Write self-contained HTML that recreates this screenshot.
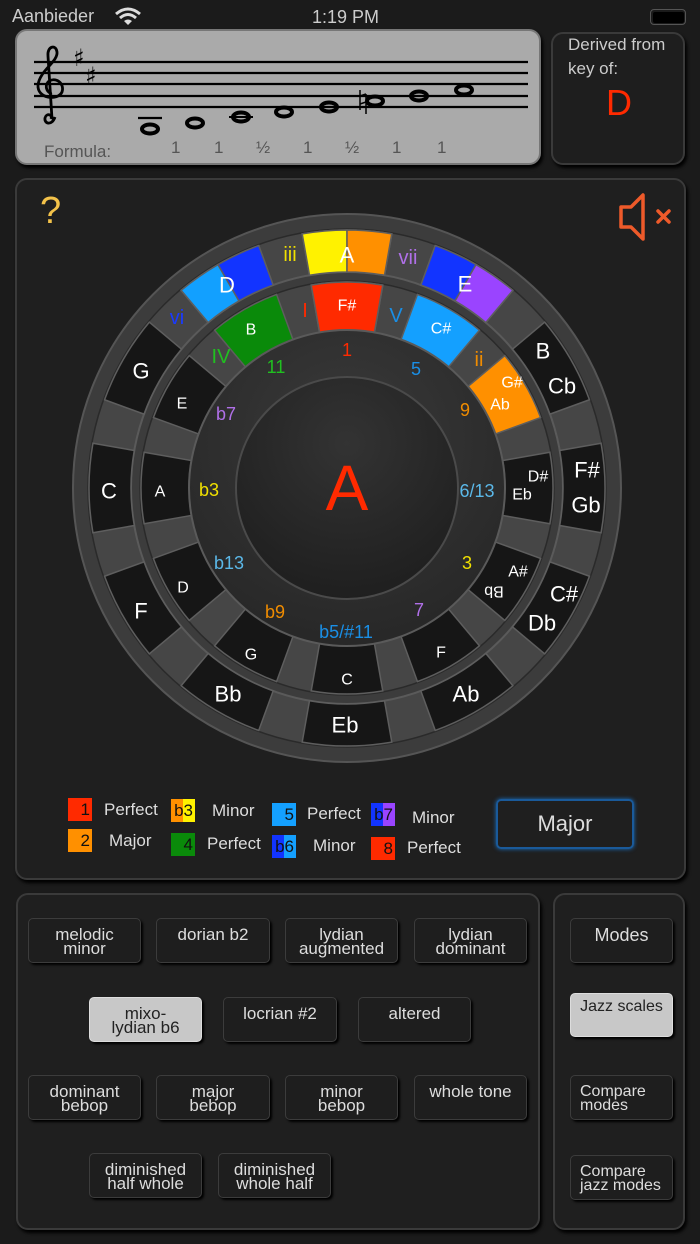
<!DOCTYPE html>
<html><head><meta charset="utf-8"><style>
*{margin:0;padding:0;box-sizing:border-box}
body{width:700px;height:1244px;background:#1b1b1b;font-family:"Liberation Sans",sans-serif;position:relative;overflow:hidden;color:#ddd}
.abs{position:absolute}
.panel{position:absolute;border:2px solid #3a3a3a;border-radius:12px;background:#1f1f1f;box-shadow:2px 3px 3px #000}
.btn{position:absolute;border:1.5px solid #3c3c3c;border-radius:5px;background:#1e1e1e;box-shadow:2px 2px 2px #000;text-align:center;font-size:17px;line-height:14px;color:#ddd;padding-top:9px}
.sel{background:#c8c8c8;color:#222;border-color:#ddd}
.lg{position:absolute;font-size:17px;color:#ddd}
.bx{position:absolute;width:24px;height:23px;font-size:17px;color:#111;text-align:right;padding-right:2px;line-height:23px}
</style></head><body>
<div class="abs" style="left:12px;top:6px;font-size:18px;color:#ccc">Aanbieder</div>
<svg class="abs" style="left:114px;top:7px" width="28" height="20" viewBox="0 0 28 20"><path d="M2 7 Q14 -3 26 7" stroke="#ddd" stroke-width="3" fill="none"/><path d="M6 11 Q14 4 22 11" stroke="#ddd" stroke-width="3" fill="none"/><path d="M14 18 L10 14 Q14 11 18 14 Z" fill="#ddd"/></svg>
<div class="abs" style="left:312px;top:7px;font-size:18px;color:#ccc">1:19 PM</div>
<div class="abs" style="left:650px;top:9px;width:36px;height:16px;border:1.5px solid #555;border-radius:4px;padding:1.5px"><div style="width:100%;height:100%;background:#000;border-radius:2px"></div></div>

<div class="abs" style="left:15px;top:29px;width:526px;height:136px;background:#aaa;border:2px solid #777;border-radius:12px;box-shadow:2px 3px 3px #000"></div>
<svg class="abs" style="left:0;top:0" width="545" height="170">
<g stroke="#000" stroke-width="2.2"><line x1="34" y1="62" x2="528" y2="62"/><line x1="34" y1="73" x2="528" y2="73"/><line x1="34" y1="84" x2="528" y2="84"/><line x1="34" y1="96" x2="528" y2="96"/><line x1="34" y1="107" x2="528" y2="107"/><line x1="138" y1="118" x2="162" y2="118"/></g>
<path d="M55 117 C52 126 44 124 45 118 C46 113 53 114 51 119 M52 119 L48 56 C47 46 56 44 57 52 C58 62 40 70 38 85 C37 99 58 101 62 92 C65 83 55 76 48 82 C44 87 48 94 52 93" stroke="#000" stroke-width="2.8" fill="none"/>
<text x="73" y="66" font-size="24" font-family="DejaVu Sans" fill="#000">♯</text>
<text x="85" y="84" font-size="24" font-family="DejaVu Sans" fill="#000">♯</text>
<g stroke="#000" stroke-width="4" fill="none">
<ellipse cx="150" cy="129" rx="8" ry="4.5"/><ellipse cx="195" cy="123" rx="8" ry="4.5"/><ellipse cx="241" cy="117" rx="8" ry="4.5"/><ellipse cx="284" cy="112" rx="8" ry="4.5"/><ellipse cx="329" cy="107" rx="8" ry="4.5"/><ellipse cx="375" cy="101" rx="8" ry="4.5"/><ellipse cx="419" cy="96" rx="8" ry="4.5"/><ellipse cx="464" cy="90" rx="8" ry="4.5"/></g>
<line x1="229" y1="117" x2="253" y2="117" stroke="#000" stroke-width="2"/>
<path d="M360 90 V110 M366 94 V114 M360 96 L366 94 M360 104 L366 102" stroke="#000" stroke-width="1.5" fill="none"/>
<g font-size="17" fill="#555"><text x="44" y="157">Formula:</text><text x="171" y="153">1</text><text x="214" y="153">1</text><text x="256" y="153">½</text><text x="303" y="153">1</text><text x="345" y="153">½</text><text x="392" y="153">1</text><text x="437" y="153">1</text></g>
</svg>
<div class="panel" style="left:551px;top:32px;width:134px;height:133px;background:#1e1e1e"></div>
<div class="abs" style="left:568px;top:33px;font-size:17px;line-height:24px;color:#ccc">Derived from<br>key of:</div>
<div class="abs" style="left:606px;top:82px;font-size:36px;color:#ff2a00">D</div>

<div class="panel" style="left:15px;top:178px;width:671px;height:702px"></div>
<div class="abs" style="left:40px;top:190px;font-size:38px;color:#f3c24a">?</div>
<svg class="abs" style="left:610px;top:188px" width="70" height="60"><path d="M11 19 H21 L33 7 V51 L21 39 H11 Z" stroke="#ee5a2a" stroke-width="3.5" fill="none" stroke-linejoin="round"/><path d="M48 23 L59 34 M59 23 L48 34" stroke="#ee5a2a" stroke-width="3.5" stroke-linecap="round"/></svg>

<svg class="abs" style="left:0;top:0" width="700" height="880">
<defs>
<radialGradient id="dg" cx="0.5" cy="0.35" r="0.7"><stop offset="0" stop-color="#3a3a3a"/><stop offset="1" stop-color="#262626"/></radialGradient>
<radialGradient id="cg" cx="0.5" cy="0.3" r="0.7"><stop offset="0" stop-color="#333"/><stop offset="1" stop-color="#1f1f1f"/></radialGradient>
</defs>
<g transform="translate(347,488)">
<circle r="274" fill="#3c3c3c" stroke="#555" stroke-width="2"/>
<circle r="259" fill="#464646" stroke="#2a2a2a" stroke-width="1.5"/>
<circle r="216" fill="#3c3c3c" stroke="#5a5a5a" stroke-width="2"/>
<circle r="207" fill="#464646" stroke="#2a2a2a" stroke-width="1.5"/>
<g stroke="#5e5e5e" stroke-width="1.5">
<g id="o"><path d="M-44.8 -254.08 A258 258 0 0 1 44.8 -254.08 L37.51 -212.72 A216 216 0 0 0 -37.51 -212.72Z" fill="#161616"/></g>
<use href="#o" transform="rotate(30)"/><use href="#o" transform="rotate(60)"/><use href="#o" transform="rotate(90)"/><use href="#o" transform="rotate(120)"/><use href="#o" transform="rotate(150)"/><use href="#o" transform="rotate(180)"/><use href="#o" transform="rotate(210)"/><use href="#o" transform="rotate(240)"/><use href="#o" transform="rotate(270)"/><use href="#o" transform="rotate(300)"/><use href="#o" transform="rotate(330)"/>
<path d="M-44.8 -254.08 A258 258 0 0 1 0 -258 L0 -216 A216 216 0 0 0 -37.51 -212.72Z" fill="#fff200"/>
<path d="M44.8 -254.08 A258 258 0 0 0 0 -258 L0 -216 A216 216 0 0 1 37.51 -212.72Z" fill="#ff9000"/>
<g transform="rotate(30)"><path d="M-44.8 -254.08 A258 258 0 0 1 0 -258 L0 -216 A216 216 0 0 0 -37.51 -212.72Z" fill="#1234ff"/><path d="M44.8 -254.08 A258 258 0 0 0 0 -258 L0 -216 A216 216 0 0 1 37.51 -212.72Z" fill="#9a44ff"/></g>
<g transform="rotate(-30)"><path d="M-44.8 -254.08 A258 258 0 0 1 0 -258 L0 -216 A216 216 0 0 0 -37.51 -212.72Z" fill="#12a0ff"/><path d="M44.8 -254.08 A258 258 0 0 0 0 -258 L0 -216 A216 216 0 0 1 37.51 -212.72Z" fill="#1234ff"/></g>
<g id="i"><path d="M-35.77 -202.87 A206 206 0 0 1 35.77 -202.87 L27.44 -155.6 A158 158 0 0 0 -27.44 -155.6Z" fill="#161616"/></g>
<use href="#i" transform="rotate(90)"/><use href="#i" transform="rotate(120)"/><use href="#i" transform="rotate(150)"/><use href="#i" transform="rotate(180)"/><use href="#i" transform="rotate(210)"/><use href="#i" transform="rotate(240)"/><use href="#i" transform="rotate(270)"/><use href="#i" transform="rotate(300)"/>
<path d="M-35.77 -202.87 A206 206 0 0 1 35.77 -202.87 L27.44 -155.6 A158 158 0 0 0 -27.44 -155.6Z" fill="#ff2a00"/>
<path transform="rotate(30)" d="M-35.77 -202.87 A206 206 0 0 1 35.77 -202.87 L27.44 -155.6 A158 158 0 0 0 -27.44 -155.6Z" fill="#14a0ff"/>
<path transform="rotate(60)" d="M-35.77 -202.87 A206 206 0 0 1 35.77 -202.87 L27.44 -155.6 A158 158 0 0 0 -27.44 -155.6Z" fill="#ff9000"/>
<path transform="rotate(-30)" d="M-35.77 -202.87 A206 206 0 0 1 35.77 -202.87 L27.44 -155.6 A158 158 0 0 0 -27.44 -155.6Z" fill="#0a8a0a"/>
</g>
<circle r="158" fill="url(#dg)" stroke="#5a5a5a" stroke-width="2"/>
<circle r="111" fill="url(#cg)" stroke="#4a4a4a" stroke-width="2"/>
</g>
<g font-family="Liberation Sans" text-anchor="middle" dominant-baseline="central" fill="#fff">
<text x="347" y="255" font-size="22">A</text><text x="465" y="284" font-size="22">E</text>
<text x="227" y="285" font-size="22">D</text><text x="141" y="371" font-size="22">G</text>
<text x="109" y="491" font-size="22">C</text><text x="141" y="611" font-size="22">F</text>
<text x="228" y="694" font-size="22">Bb</text><text x="345" y="725" font-size="22">Eb</text>
<text x="466" y="694" font-size="22">Ab</text>
<text x="543" y="351" font-size="22">B</text><text x="562" y="386" font-size="22">Cb</text>
<text x="587" y="470" font-size="22">F#</text><text x="586" y="505" font-size="22">Gb</text>
<text x="564" y="594" font-size="22">C#</text><text x="542" y="623" font-size="22">Db</text>
<text x="290" y="255" font-size="20" fill="#f0e000">iii</text><text x="408" y="258" font-size="20" fill="#b070e8">vii</text><text x="177" y="318" font-size="20" fill="#1a3aff">vi</text>
<text x="305" y="311" font-size="20" fill="#ff2a00">I</text><text x="396" y="316" font-size="20" fill="#1a8fe6">V</text><text x="479" y="360" font-size="20" fill="#f08c00">ii</text><text x="221" y="357" font-size="20" fill="#20c020">IV</text>
<g font-size="16"><text x="347" y="306">F#</text><text x="441" y="329">C#</text><text x="251" y="330">B</text>
<text x="512" y="383">G#</text><text x="500" y="405">Ab</text><text x="538" y="477">D#</text><text x="522" y="495">Eb</text>
<text x="518" y="572">A#</text><text x="494" y="591" transform="rotate(180 494 591)">Bb</text>
<text x="441" y="653">F</text><text x="347" y="680">C</text><text x="251" y="655">G</text><text x="183" y="588">D</text><text x="160" y="492">A</text><text x="182" y="404">E</text></g>
<g font-size="18"><text x="347" y="350" fill="#ff2a00">1</text><text x="416" y="369" fill="#1a8fe6">5</text><text x="465" y="410" fill="#f08c00">9</text><text x="477" y="491" fill="#5bb8e8">6/13</text><text x="467" y="563" fill="#f0e000">3</text><text x="419" y="610" fill="#b070e8">7</text><text x="346" y="632" fill="#1a8fe6">b5/#11</text><text x="275" y="612" fill="#f08c00">b9</text><text x="229" y="563" fill="#5bb8e8">b13</text><text x="209" y="490" fill="#f0e000">b3</text><text x="226" y="414" fill="#b070e8">b7</text><text x="276" y="367" fill="#20c020">11</text></g>
<text x="347" y="488" font-size="64" fill="#ff2a00">A</text>
</g>
</svg>

<div class="bx" style="left:68px;top:798px;background:#ff2a00">1</div><div class="lg" style="left:104px;top:800px">Perfect</div>
<div class="bx" style="left:171px;top:799px;background:linear-gradient(90deg,#ff9000 50%,#fff200 50%)">b3</div><div class="lg" style="left:212px;top:801px">Minor</div>
<div class="bx" style="left:272px;top:803px;background:#14a0ff">5</div><div class="lg" style="left:307px;top:804px">Perfect</div>
<div class="bx" style="left:371px;top:803px;background:linear-gradient(90deg,#1234ff 50%,#9a44ff 50%)">b7</div><div class="lg" style="left:412px;top:808px">Minor</div>
<div class="bx" style="left:68px;top:829px;background:#ff9000">2</div><div class="lg" style="left:109px;top:831px">Major</div>
<div class="bx" style="left:171px;top:833px;background:#0a8a0a">4</div><div class="lg" style="left:207px;top:834px">Perfect</div>
<div class="bx" style="left:272px;top:835px;background:linear-gradient(90deg,#1234ff 50%,#14a0ff 50%)">b6</div><div class="lg" style="left:313px;top:836px">Minor</div>
<div class="bx" style="left:371px;top:837px;background:#ff2a00">8</div><div class="lg" style="left:407px;top:838px">Perfect</div>
<div class="abs" style="left:496px;top:799px;width:138px;height:50px;border:2px solid #1a5a9a;border-radius:5px;box-shadow:0 0 4px #1a70c0;text-align:center;font-size:22px;line-height:46px;color:#ddd">Major</div>

<div class="panel" style="left:16px;top:893px;width:524px;height:337px"></div>
<div class="panel" style="left:553px;top:893px;width:132px;height:337px"></div>
<div class="btn" style="left:28px;top:918px;width:113px;height:45px">melodic<br>minor</div>
<div class="btn" style="left:156px;top:918px;width:114px;height:45px">dorian b2</div>
<div class="btn" style="left:285px;top:918px;width:113px;height:45px">lydian<br>augmented</div>
<div class="btn" style="left:414px;top:918px;width:113px;height:45px">lydian<br>dominant</div>
<div class="btn sel" style="left:89px;top:997px;width:113px;height:45px">mixo-<br>lydian b6</div>
<div class="btn" style="left:223px;top:997px;width:114px;height:45px">locrian #2</div>
<div class="btn" style="left:358px;top:997px;width:113px;height:45px">altered</div>
<div class="btn" style="left:28px;top:1075px;width:113px;height:45px">dominant<br>bebop</div>
<div class="btn" style="left:156px;top:1075px;width:114px;height:45px">major<br>bebop</div>
<div class="btn" style="left:285px;top:1075px;width:113px;height:45px">minor<br>bebop</div>
<div class="btn" style="left:414px;top:1075px;width:113px;height:45px">whole tone</div>
<div class="btn" style="left:89px;top:1153px;width:113px;height:45px">diminished<br>half whole</div>
<div class="btn" style="left:218px;top:1153px;width:113px;height:45px">diminished<br>whole half</div>
<div class="btn" style="left:570px;top:918px;width:103px;height:45px;font-size:18px">Modes</div>
<div class="btn sel" style="left:570px;top:993px;width:103px;height:44px;padding-top:6px;font-size:16px">Jazz scales</div>
<div class="btn" style="left:570px;top:1075px;width:103px;height:45px;text-align:left;padding-left:9px;font-size:16px">Compare<br>modes</div>
<div class="btn" style="left:570px;top:1155px;width:103px;height:45px;text-align:left;padding-left:9px;font-size:16px">Compare<br>jazz modes</div>
</body></html>
